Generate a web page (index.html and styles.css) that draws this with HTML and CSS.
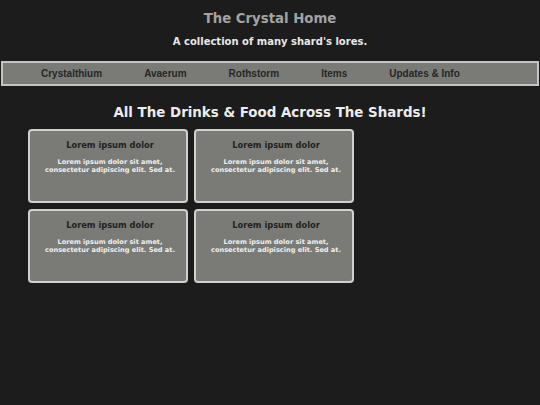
FILE: index.html
```html
<!DOCTYPE html>
<html>
<head>
<meta charset="utf-8">
<link rel="stylesheet" href="styles.css">
</head>
<body>
<header class="site-header">
  <h1 class="site-title">The Crystal Home</h1>
  <p class="site-subtitle">A collection of many shard's lores.</p>
</header>
<nav class="main-nav">
  <a class="nav-link" href="#">Crystalthium</a>
  <a class="nav-link" href="#">Avaerum</a>
  <a class="nav-link" href="#">Rothstorm</a>
  <a class="nav-link" href="#">Items</a>
  <a class="nav-link" href="#">Updates &amp; Info</a>
</nav>
<main class="content">
  <h2 class="page-heading">All The Drinks &amp; Food Across The Shards!</h2>
  <div class="card-grid">
    <div class="card">
      <h3 class="card-title">Lorem ipsum dolor</h3>
      <p class="card-text">Lorem ipsum dolor sit amet,<br>consectetur adipiscing elit. Sed at.</p>
    </div>
    <div class="card">
      <h3 class="card-title">Lorem ipsum dolor</h3>
      <p class="card-text">Lorem ipsum dolor sit amet,<br>consectetur adipiscing elit. Sed at.</p>
    </div>
    <div class="card">
      <h3 class="card-title">Lorem ipsum dolor</h3>
      <p class="card-text">Lorem ipsum dolor sit amet,<br>consectetur adipiscing elit. Sed at.</p>
    </div>
    <div class="card">
      <h3 class="card-title">Lorem ipsum dolor</h3>
      <p class="card-text">Lorem ipsum dolor sit amet,<br>consectetur adipiscing elit. Sed at.</p>
    </div>
  </div>
</main>
</body>
</html>
```
FILE: styles.css
```css
html, body {
  margin: 0;
  padding: 0;
  background: #1c1c1c;
  font-family: "DejaVu Sans", Verdana, sans-serif;
}
.site-header {
  text-align: center;
  padding-top: 11px;
}
.site-title {
  margin: 0;
  font-size: 13.3px;
  line-height: 16px;
  font-weight: bold;
  color: #a3a3a3;
}
.site-subtitle {
  margin: 9px 0 0;
  font-size: 10px;
  line-height: 12px;
  font-weight: bold;
  color: #e8e8e8;
}
.main-nav {
  margin: 13px 1px 0;
  height: 21px;
  border: 2px solid #c4c4c2;
  background: #7a7b77;
  display: flex;
  align-items: center;
  gap: 42px;
  padding-left: 38px;
}
.nav-link {
  font-family: "Liberation Sans", Arial, sans-serif;
  font-weight: bold;
  font-size: 10px;
  color: #262626;
  text-decoration: none;
}
.content {
  padding: 0;
}
.page-heading {
  margin: 19px 0 0;
  text-align: center;
  font-size: 13.4px;
  line-height: 16px;
  color: #ececec;
}
.card-grid {
  display: grid;
  grid-template-columns: 160px 160px;
  gap: 6px;
  margin-top: 8px;
  padding-left: 28px;
}
.card {
  border: 2px solid #d0d0ce;
  border-radius: 4px;
  background: #7a7b77;
  text-align: center;
  padding: 9px 0 0 4px;
  height: 61px;
}
.card-title {
  margin: 0;
  font-size: 8.3px;
  line-height: 10px;
  font-weight: bold;
  color: #1f1f1f;
}
.card-text {
  margin: 8px 0 0;
  font-size: 6.6px;
  line-height: 8px;
  font-weight: bold;
  color: #efefef;
}
```
